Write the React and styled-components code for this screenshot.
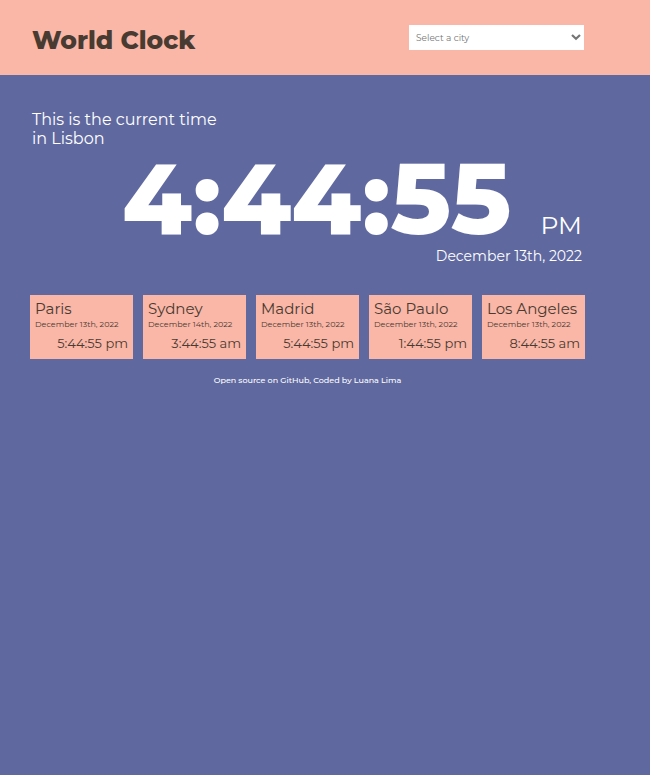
import React from "react";
import styled, { createGlobalStyle } from "styled-components";

const GlobalStyle = createGlobalStyle`
  *, *::before, *::after { box-sizing: border-box; }
  body {
    margin: 0;
    min-height: 100vh;
    background: #60699f;
    color: #fff;
    font-family: Montserrat, Inter, "Open Sans", sans-serif;
    font-weight: 400;
  }
  h1, h2, p, time { margin: 0; }
`;

const Header = styled.header`
  display: flex;
  align-items: center;
  justify-content: space-between;
  gap: 24px;
  min-height: 75px;
  padding: 0 66px 0 32px;
  background: #fab6a6;
`;

const Title = styled.h1`
  padding-top: 4px;
  color: #483b31;
  font-size: 25px;
  font-weight: 800;
  line-height: 32px;
`;

const Picker = styled.label`
  display: grid;
  align-items: center;
  width: 175px;

  > * { grid-area: 1 / 1; }
  svg { justify-self: end; margin-right: 3px; pointer-events: none; }
`;

const Select = styled.select`
  appearance: none;
  width: 100%;
  height: 25px;
  padding: 0 20px 0 7px;
  border: 0;
  border-radius: 0;
  background: #fff;
  color: #757575;
  font: inherit;
  font-size: 9px;
`;

const Main = styled.main`
  padding: 35px 65px 0 30px;
`;

const Intro = styled.h2`
  max-width: 200px;
  margin-left: 2px;
  font-size: 16px;
  font-weight: 400;
  line-height: 19px;
`;

const Clock = styled.div`
  display: flex;
  align-items: baseline;
  justify-content: flex-end;
  gap: 29px;
  padding-right: 3px;
`;

const Digits = styled.time`
  font-size: 100px;
  font-weight: 800;
  line-height: 100px;
`;

const Period = styled.span`
  font-size: 25px;
  line-height: 32px;
`;

const CurrentDate = styled.p`
  padding-right: 3px;
  font-size: 14px;
  line-height: 16px;
  text-align: right;
`;

const Cities = styled.section`
  display: grid;
  grid-template-columns: repeat(5, 1fr);
  gap: 10px;
  margin-top: 31px;
`;

const Card = styled.article`
  min-height: 64px;
  padding: 5px 5px 0;
  background: #fab6a6;
  color: #483b31;
  white-space: nowrap;
`;

const CityName = styled.h2`
  font-size: 15px;
  font-weight: 400;
  line-height: 18px;
`;

const CityDate = styled.p`
  font-size: 8px;
  line-height: 12px;
`;

const CityTime = styled.p`
  margin-top: 5px;
  font-size: 13px;
  line-height: 16px;
  text-align: right;
`;

const Footer = styled.footer`
  padding: 16px 0;
  font-size: 8px;
  font-weight: 500;
  line-height: 11px;
  text-align: center;
`;

const Link = styled.a`
  color: inherit;
  text-decoration: none;
`;

const cities = [
  { name: "Paris", date: "December 13th, 2022", time: "5:44:55 pm" },
  { name: "Sydney", date: "December 14th, 2022", time: "3:44:55 am" },
  { name: "Madrid", date: "December 13th, 2022", time: "5:44:55 pm" },
  { name: "São Paulo", date: "December 13th, 2022", time: "1:44:55 pm" },
  { name: "Los Angeles", date: "December 13th, 2022", time: "8:44:55 am" },
];

export default function App() {
  return (
    <>
      <GlobalStyle />
      <Header>
        <Title>World Clock</Title>
        <Picker>
          <Select aria-label="City" defaultValue="">
            <option value="">Select a city</option>
            {cities.map(({ name }) => <option key={name}>{name}</option>)}
          </Select>
          <svg width="10" height="9" viewBox="0 0 10 9" fill="none" aria-hidden="true">
            <path d="M1 2 L5 5.8 L9 2" stroke="#757575" strokeWidth="2.2" />
          </svg>
        </Picker>
      </Header>
      <Main>
        <Intro>This is the current time in Lisbon</Intro>
        <Clock>
          <Digits>4:44:55</Digits>
          <Period>PM</Period>
        </Clock>
        <CurrentDate>December 13th, 2022</CurrentDate>
        <Cities>
          {cities.map(({ name, date, time }) => (
            <Card key={name}>
              <CityName>{name}</CityName>
              <CityDate>{date}</CityDate>
              <CityTime>{time}</CityTime>
            </Card>
          ))}
        </Cities>
        <Footer>
          <Link href="#source">Open source on GitHub</Link>, Coded by Luana Lima
        </Footer>
      </Main>
    </>
  );
}
